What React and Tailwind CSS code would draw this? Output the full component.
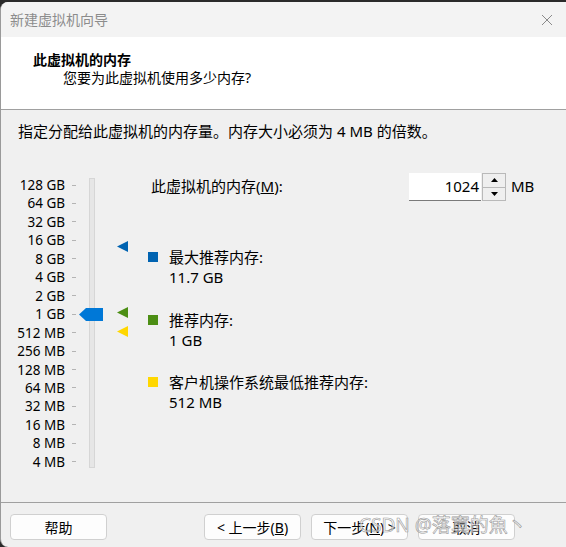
import React from "react";

const FONT = {
  fontFamily: '"Noto Sans", "Noto Sans CJK SC", sans-serif',
};

const SCALE = [
  "128 GB", "64 GB", "32 GB", "16 GB", "8 GB", "4 GB", "2 GB", "1 GB",
  "512 MB", "256 MB", "128 MB", "64 MB", "32 MB", "16 MB", "8 MB", "4 MB",
];

function Marker({ color, className }) {
  return (
    <svg width="11" height="11" viewBox="0 0 11 11" className={className}>
      <polygon points="0,5.5 11,0 11,11" fill={color} />
    </svg>
  );
}

function LegendItem({ color, label, value, className }) {
  return (
    <div className={"flex items-start gap-[11px] " + className}>
      <div className={"mt-[5px] h-[10px] w-[10px] shrink-0 " + color} />
      <div className="flex flex-col leading-[20px]">
        <span>{label}</span>
        <span>{value}</span>
      </div>
    </div>
  );
}

function Button({ children, className }) {
  return (
    <button
      className={
        "flex h-[26px] w-[97px] items-center justify-center rounded-[4px] border border-[#d0d0d0] bg-[#fdfdfd] text-[14px] text-black " +
        className
      }
    >
      {children}
    </button>
  );
}

export default function App() {
  return (
    <div className="h-[547px] w-[566px] overflow-hidden bg-[#2a2a2a]" style={FONT}>
      <div className="mt-[2px] flex h-[545px] flex-col overflow-hidden rounded-l-[8px] border-l border-[#9a9a9a] bg-[#f0f0f0] text-[15px] text-black">
        {/* title bar */}
        <div className="flex h-[35px] shrink-0 items-center justify-between bg-[#f3f3f3] pl-[9px] pr-[13px]">
          <span className="text-[14px] text-[#8c8c8c]">新建虚拟机向导</span>
          <svg width="12" height="12" viewBox="0 0 12 12">
            <path d="M1 1 L11 11 M11 1 L1 11" stroke="#8a8a8a" strokeWidth="1" />
          </svg>
        </div>

        {/* header */}
        <div className="flex h-[73px] shrink-0 flex-col border-b border-[#a0a0a0] bg-white pl-[32px] pt-[14px] text-[14px]">
          <span className="font-bold leading-[18px]">此虚拟机的内存</span>
          <span className="ml-[30px] leading-[18px]">您要为此虚拟机使用多少内存?</span>
        </div>

        {/* body */}
        <div className="flex flex-1 flex-col border-b border-[#a0a0a0] pl-[17px] pt-[12px]">
          <span className="whitespace-nowrap leading-[18px]">
            指定分配给此虚拟机的内存量。内存大小必须为 4 MB 的倍数。
          </span>

          <div className="mt-[36px] flex">
            {/* scale */}
            <div className="flex h-[295px] w-[47px] shrink-0 flex-col justify-between text-[13.5px]">
              {SCALE.map((s) => (
                <div
                  key={s}
                  className="flex h-[18px] items-center justify-end whitespace-nowrap leading-[18px]"
                >
                  {s}
                </div>
              ))}
            </div>
            <div className="ml-[7px] flex h-[295px] shrink-0 flex-col justify-between">
              {SCALE.map((s) => (
                <div key={s} className="flex h-[18px] items-center">
                  <div className="h-px w-[4px] bg-[#b4b4b4]" />
                </div>
              ))}
            </div>

            {/* slider */}
            <div className="relative ml-[1px] w-[71px] shrink-0">
              <div className="ml-[12px] mt-[2px] h-[290px] w-[6px] border border-[#d6d6d6] bg-[#e6e6e6]" />
              <svg
                width="24"
                height="13"
                viewBox="0 0 24 13"
                className="absolute left-[2px] top-[132px]"
              >
                <polygon points="0,6.5 7,0 24,0 24,13 7,13" fill="#0078d7" />
              </svg>
              <Marker color="#0063b1" className="absolute left-[40px] top-[65px]" />
              <Marker color="#4c8e14" className="absolute left-[40px] top-[131px]" />
              <Marker color="#ffd700" className="absolute left-[40px] top-[150px]" />
            </div>

            {/* right side */}
            <div className="-mt-[3px] flex flex-1 flex-col">
              <div className="flex h-[28px] items-start">
                <span className="ml-[3px] mt-[4px] w-[258px] shrink-0 whitespace-nowrap leading-[18px]">
                  此虚拟机的内存(<span className="underline">M</span>):
                </span>
                <div className="flex h-[28px]">
                  <div className="flex w-[72px] items-center justify-end border-b border-[#7a7a7a] bg-white pr-[2px]">
                    1024
                  </div>
                  <div className="ml-px flex w-[24px] flex-col border border-[#b9b9b9]">
                    <div className="flex flex-1 items-center justify-center border-b border-[#b9b9b9] bg-[#efefef]">
                      <svg width="7" height="4" viewBox="0 0 7 4">
                        <polygon points="3.5,0 7,4 0,4" fill="#000" />
                      </svg>
                    </div>
                    <div className="flex flex-1 items-center justify-center bg-[#efefef]">
                      <svg width="7" height="4" viewBox="0 0 7 4">
                        <polygon points="0,0 7,0 3.5,4" fill="#000" />
                      </svg>
                    </div>
                  </div>
                </div>
                <span className="ml-[5px] mt-[4px] leading-[18px]">MB</span>
              </div>

              <LegendItem
                color="bg-[#0063b1]"
                label="最大推荐内存:"
                value="11.7 GB"
                className="mt-[46px]"
              />
              <LegendItem
                color="bg-[#4c8e14]"
                label="推荐内存:"
                value="1 GB"
                className="mt-[23px]"
              />
              <LegendItem
                color="bg-[#ffd700]"
                label="客户机操作系统最低推荐内存:"
                value="512 MB"
                className="mt-[22px]"
              />
            </div>
          </div>
        </div>

        {/* footer */}
        <div className="relative flex h-[44px] shrink-0 items-start pl-[9px] pt-[11px]">
          <Button>帮助</Button>
          <Button className="ml-[97px]">
            &lt; 上一步(<span className="underline">B</span>)
          </Button>
          <Button className="ml-[10px]">
            下一步(<span className="underline">N</span>) &gt;
          </Button>
          <Button className="ml-[10px]">取消</Button>
          <span className="pointer-events-none absolute left-[358px] top-[8px] whitespace-nowrap text-[19px] text-white/60 [-webkit-text-stroke:0.6px_#9a9a9a]">
            CSDN @落寞的魚丶
          </span>
        </div>
      </div>
    </div>
  );
}
